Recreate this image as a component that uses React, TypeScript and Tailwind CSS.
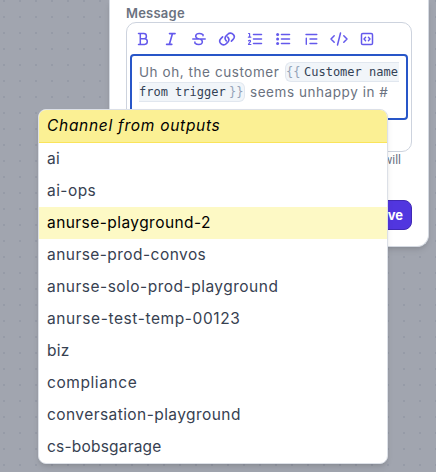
import type { ReactNode } from 'react';

const channels = [
  { name: 'ai', tracking: 'tracking-[0.25px]' },
  { name: 'ai-ops', tracking: 'tracking-[0.45px]' },
  { name: 'anurse-playground-2', tracking: 'tracking-[0.44px]' },
  { name: 'anurse-prod-convos', tracking: 'tracking-[0.45px]' },
  { name: 'anurse-solo-prod-playground', tracking: 'tracking-[0.49px]' },
  { name: 'anurse-test-temp-00123', tracking: 'tracking-[0.6px]' },
  { name: 'biz', tracking: 'tracking-[0.3px]' },
  { name: 'compliance', tracking: 'tracking-[0.58px]' },
  { name: 'conversation-playground', tracking: 'tracking-[0.43px]' },
  { name: 'cs-bobsgarage', tracking: 'tracking-[0.2px]' },
];

function Icon({ children }: { children: ReactNode }) {
  return (
    <svg width="20" height="16" viewBox="0 0 20 16" fill="none" stroke="currentColor" strokeWidth="1.5" strokeLinecap="round" strokeLinejoin="round">
      {children}
    </svg>
  );
}

function Toolbar() {
  return (
    <div className="flex h-[31px] items-center gap-2 pl-[6px] text-[#6459ec]">
      <Icon><path d="M5.5 2.6h5.3a2.5 2.5 0 0 1 0 5.2H7.3M10.8 7.8h.7a2.8 2.8 0 0 1 0 5.6h-6M7.3 2.6v10.8" strokeWidth="1.5" /></Icon>
      <Icon><path d="M8.5 2.6h5.6M5.6 13.4h5.2M11.5 2.6 8.3 13.4" strokeWidth="1.6" /></Icon>
      <Icon><path d="M3.8 8h12.4M14 4.8V3.6C12.9 2.9 11.7 2.5 10.2 2.5c-4 0-4.5 3.8-1.6 4.9l2.4.7c3.5 1.2 3.1 5.4-1.2 5.4-1.6 0-2.8-.5-3.9-1.4v-1" /></Icon>
      <Icon>
        <g strokeWidth="1.6">
          <path d="M9.3 9.9A3.6 3.6 0 0 1 9.2 4.9l1.6-1.6a3.6 3.6 0 0 1 5.4.1 3.6 3.6 0 0 1-.1 5l-1.7 1.7" />
          <path d="M10.7 6.1a3.6 3.6 0 0 1 .1 5l-1.6 1.6a3.6 3.6 0 0 1-5.4-.1 3.6 3.6 0 0 1 .1-5l1.7-1.7" />
        </g>
      </Icon>
      <Icon>
        <path d="M8.5 3.5h8M8.5 8h8M8.5 12.5h8" />
        <path d="M3.6 2.5h1v3.7M3.4 6.2h2.4M3.5 9.8c1-.8 2.1-.4 2 .5 0 .8-1.4 1.5-2 3.2h2.4" strokeWidth="1.2" />
      </Icon>
      <Icon>
        <path d="M8.5 3.5h8M8.5 8h8M8.5 12.5h8" strokeWidth="1.6" />
        <g fill="currentColor" stroke="none"><circle cx="4.6" cy="3.5" r="1.5" /><circle cx="4.6" cy="8" r="1.5" /><circle cx="4.6" cy="12.5" r="1.5" /></g>
      </Icon>
      <Icon><path d="M5 3.5h10.8M9 8h6.8M9 12.5h6.8M5.3 7.2v6" strokeWidth="1.4" /></Icon>
      <Icon><path d="M5.2 4.7 2 8l3.2 3.3M14.8 4.7 18 8l-3.2 3.3M11.5 2 8.5 14" /></Icon>
      <Icon>
        <rect x="4.5" y="2.4" width="11" height="11.2" rx="1.3" strokeWidth="1.5" />
        <path d="M8.6 6.2 7 8l1.6 1.8M11.4 6.2 13 8l-1.6 1.8" strokeWidth="1.4" />
      </Icon>
    </div>
  );
}

export default function App() {
  return (
    <div className="relative h-[472px] w-[436px] overflow-hidden bg-[#a1a5af] bg-[radial-gradient(circle,#969ba7_1px,transparent_1.4px)] bg-size-[16px_16px] bg-position-[-4px_-7px] font-['Inter',sans-serif]">
      <div className="ml-[109px] h-[247px] w-[320px] rounded-b-xl border-x border-b border-[#d5dae2] bg-white px-4 pt-1 shadow-md">
        <div className="h-[18px] text-[13px] leading-[18px] font-semibold tracking-[0.22px] text-[#6b7280]">Message</div>
        <div className="h-[130px] w-[286px] rounded-[10px] border border-[#cdd3de]">
          <Toolbar />
          <div className="ml-[3px] h-[66px] w-[278px] rounded-[4px] border-2 border-[#2856c8] pt-[6px] pl-[7px] text-[13.5px] leading-5 text-[#6b7280]">
            <div className="flex h-5 items-center whitespace-pre">
              <span className="w-[146px] tracking-[0.57px]">Uh oh, the customer </span>
              <span className="flex h-[20px] w-[114px] items-center rounded-l-md border-y border-l border-[#e1e7ef] bg-[#f1f5f9] font-['DejaVu_Sans_Mono',monospace] text-[12px] text-[#334155]">
                <span className="w-[18px] text-[#94a3b8]">{'{{'}</span>Customer name
              </span>
            </div>
            <div className="flex h-5 items-center whitespace-pre">
              <span className="mr-[5px] flex h-[20px] w-[106px] items-center rounded-r-md border-y border-r border-[#e1e7ef] bg-[#f1f5f9] font-['DejaVu_Sans_Mono',monospace] text-[12px] text-[#334155]">
                <span className="w-[90px]">from trigger</span><span className="text-[#94a3b8]">{'}}'}</span>
              </span>
              <span className="tracking-[0.56px]">seems unhappy in #</span>
            </div>
          </div>
        </div>
        <div className="w-[275px] text-right font-['Roboto',sans-serif] text-xs leading-4 text-[#6b7280]">will</div>
        <button className="mt-8 ml-[206px] flex h-[30px] w-[80px] items-center justify-end rounded-lg border border-[#4029b5] bg-[#5136df] pt-px pr-[8px] text-[13px] font-bold text-white">Save</button>
      </div>

      <div className="absolute top-[109px] left-[38px] h-[355px] w-[350px] overflow-hidden rounded-lg border border-[#dce0e7] bg-white text-[15.5px] text-[#374151] shadow-md">
        <div className="flex h-[33px] items-center border-b border-[#fae45b] bg-[#fbf094] pl-2 text-black italic"><span className="tracking-[0.71px]">Channel from outputs</span></div>
        {channels.map((c) => (
          <div key={c.name} className={c.name === 'anurse-playground-2' ? 'flex h-8 items-center bg-[#fdf9c5] pl-2 text-black' : 'flex h-8 items-center pl-2'}>
            <span className={c.tracking}>{c.name}</span>
          </div>
        ))}
      </div>
    </div>
  );
}
